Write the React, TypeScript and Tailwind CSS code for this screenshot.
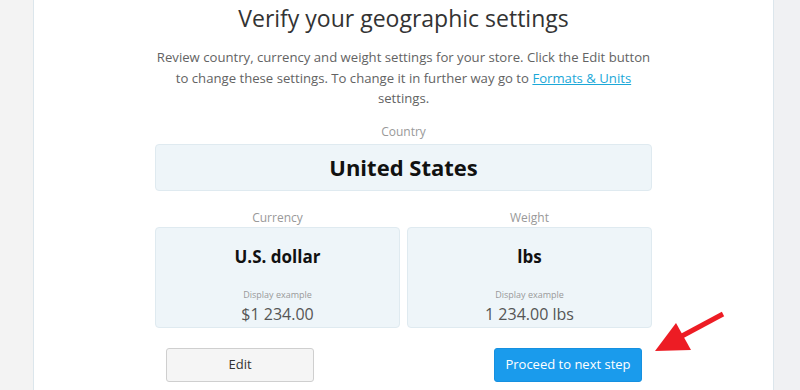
import React from 'react';

const font = { fontFamily: '"Open Sans", "Noto Sans", sans-serif' };

function Arrow() {
  return (
    <svg className="absolute left-[640px] top-[300px]" width="100" height="70" viewBox="0 0 100 70">
      <line x1="83" y1="14" x2="42" y2="36" stroke="#ed1c24" strokeWidth="5" />
      <polygon points="15,51 36,23 51,50" fill="#ed1c24" />
    </svg>
  );
}

export default function App() {
  return (
    <div className="relative flex h-[390px] w-[800px] overflow-hidden bg-[#f3f3f3]" style={font}>
      <div className="w-[33px] shrink-0" />
      <div className="flex w-[741px] shrink-0 flex-col items-center border-x border-[#dce6ec] bg-white">
        <h1 className="mt-[1px] text-[23px] leading-[34px] font-normal text-[#333]">Verify your geographic settings</h1>
        <p className="mt-[12px] text-center text-[13.15px] leading-[20.5px] text-[#636363]">
          Review country, currency and weight settings for your store. Click the Edit button
          <br />
          to change these settings. To change it in further way go to{' '}
          <a className="text-[#1ba8d8] underline">Formats &amp; Units</a>
          <br />
          settings.
        </p>

        <div className="mt-[15px] flex w-[497px] flex-col">
          <div className="text-center text-[12px] leading-[16px] text-[#999]">Country</div>
          <div className="mt-[4px] flex h-[47px] items-center justify-center rounded-[4px] border border-[#dfeaf0] bg-[#eef5f9]">
            <span className="text-[22px] font-bold text-[#111]">United States</span>
          </div>

          <div className="mt-[19px] grid grid-cols-2 gap-[7px]">
            {[
              { label: 'Currency', value: 'U.S. dollar', example: '$1 234.00' },
              { label: 'Weight', value: 'lbs', example: '1 234.00 lbs' },
            ].map(c => (
              <div key={c.label} className="flex flex-col">
                <div className="text-center text-[12px] leading-[16px] text-[#999]">{c.label}</div>
                <div className="mt-[1px] flex h-[101px] flex-col items-center rounded-[4px] border border-[#dfeaf0] bg-[#eef5f9]">
                  <span className="mt-[16px] text-[17px] leading-[26px] font-bold text-[#111]">{c.value}</span>
                  <span className="mt-[19px] text-[9px] leading-[12px] text-[#999]">Display example</span>
                  <span className="mt-[2px] text-[16px] leading-[22px] text-[#555]">{c.example}</span>
                </div>
              </div>
            ))}
          </div>

          <div className="mt-[20px] flex justify-between pl-[11px] pr-[10px]">
            <button className="h-[34px] w-[148px] rounded-[3px] border border-[#cfcfcf] bg-[#f5f5f5] text-[13px] text-[#333]">
              Edit
            </button>
            <button className="h-[34px] w-[148px] rounded-[3px] border border-[#1690e0] bg-[#1a9bec] text-[13px] text-white">
              Proceed to next step
            </button>
          </div>
        </div>
      </div>
      <div className="flex-1 bg-[#f0f1f3]" />
      <Arrow />
    </div>
  );
}
